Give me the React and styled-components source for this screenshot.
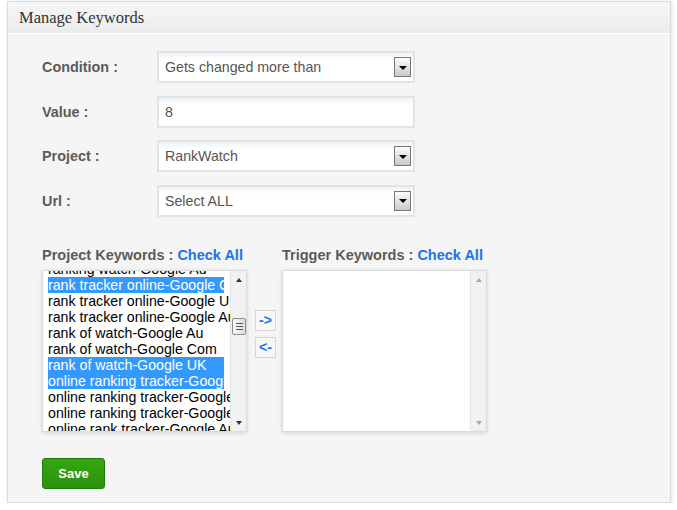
import React from "react";
import styled, { createGlobalStyle } from "styled-components";

const GlobalStyle = createGlobalStyle`
  body {
    margin: 0;
    background: #fff;
    font-family: "Liberation Sans", Arial, sans-serif;
  }
`;

const projectKeywords = [
  { text: "ranking watch-Google Au" },
  { text: "rank tracker online-Google Com", selected: true },
  { text: "rank tracker online-Google UK" },
  { text: "rank tracker online-Google Au" },
  { text: "rank of watch-Google Au" },
  { text: "rank of watch-Google Com" },
  { text: "rank of watch-Google UK", selected: true },
  { text: "online ranking tracker-Google Com", selected: true },
  { text: "online ranking tracker-Google UK" },
  { text: "online ranking tracker-Google Au" },
  { text: "online rank tracker-Google Au" },
];

export default function App() {
  return (
    <Page>
      <GlobalStyle />
      <Panel>
        <Header>Manage Keywords</Header>
        <Body>
          <Form>
            <Row>
              <Label>Condition :</Label>
              <Field>
                Gets changed more than
                <DropButton />
              </Field>
            </Row>
            <Row>
              <Label>Value :</Label>
              <Field>8</Field>
            </Row>
            <Row>
              <Label>Project :</Label>
              <Field>
                RankWatch
                <DropButton />
              </Field>
            </Row>
            <Row>
              <Label>Url :</Label>
              <Field>
                Select ALL
                <DropButton />
              </Field>
            </Row>
          </Form>

          <Keywords>
            <Column>
              <ListTitle>
                Project Keywords : <CheckAll>Check All</CheckAll>
              </ListTitle>
              <ListBox>
                <ListContent>
                  <Items>
                    {projectKeywords.map((k) => (
                      <Item key={k.text} $selected={k.selected}>
                        {k.text}
                      </Item>
                    ))}
                  </Items>
                </ListContent>
                <Scrollbar>
                  <Arrow $dir="up" />
                  <Thumb $top={47}>
                    <Grip />
                    <Grip />
                    <Grip />
                  </Thumb>
                  <Arrow $dir="down" />
                </Scrollbar>
              </ListBox>
            </Column>

            <Movers>
              <MoveButton>-&gt;</MoveButton>
              <MoveButton>&lt;-</MoveButton>
            </Movers>

            <Column>
              <ListTitle>
                Trigger Keywords : <CheckAll>Check All</CheckAll>
              </ListTitle>
              <ListBox>
                <ListContent />
                <Scrollbar>
                  <Arrow $dir="up" $disabled />
                  <Arrow $dir="down" $disabled />
                </Scrollbar>
              </ListBox>
            </Column>
          </Keywords>

          <SaveButton>Save</SaveButton>
        </Body>
      </Panel>
    </Page>
  );
}

const Page = styled.div`
  padding: 1px 6px 0 7px;
`;

const Panel = styled.div`
  box-sizing: border-box;
  height: 502px;
  background: #f5f5f5;
  border: 1px solid #dcdcdc;
  box-shadow: 1px 1px 4px rgba(0, 0, 0, 0.12);
`;

const Header = styled.div`
  height: 31px;
  line-height: 32px;
  padding-left: 11px;
  background: linear-gradient(#f7f7f7, #ebebeb);
  border-bottom: 1px solid #fff;
  font-family: "Liberation Serif", "Times New Roman", serif;
  font-size: 16.5px;
  color: #333;
`;

const Body = styled.div`
  padding: 17px 0 0 34px;
`;

const Form = styled.div`
  display: flex;
  flex-direction: column;
  gap: 12.5px;
`;

const Row = styled.div`
  display: flex;
  align-items: center;
  height: 32px;
`;

const Label = styled.div`
  width: 115px;
  font-size: 14.4px;
  font-weight: bold;
  color: #5b5b5b;
`;

const Field = styled.div`
  box-sizing: border-box;
  width: 258px;
  height: 32px;
  display: flex;
  align-items: center;
  padding-left: 6px;
  border: 2px solid #e3e3e3;
  background: linear-gradient(#eef3fa 0, #fff 7px);
  font-size: 14.2px;
  color: #555;
`;

const DropButton = styled.span`
  box-sizing: border-box;
  margin-left: auto;
  margin-right: 2px;
  width: 17px;
  height: 20px;
  border: 1px solid #777;
  background: linear-gradient(#fdfdfd, #c9c9c9);
  display: flex;
  align-items: center;
  justify-content: center;

  &::after {
    content: "";
    border-left: 4px solid transparent;
    border-right: 4px solid transparent;
    border-top: 4px solid #000;
    margin-top: 1px;
  }
`;

const Keywords = styled.div`
  display: flex;
  margin-top: 29px;
`;

const Column = styled.div`
  display: flex;
  flex-direction: column;
  width: 205px;
`;

const ListTitle = styled.div`
  height: 18px;
  line-height: 18px;
  margin-bottom: 6px;
  font-size: 14.5px;
  font-weight: bold;
  color: #5b5b5b;
  white-space: nowrap;
`;

const CheckAll = styled.span`
  color: #1a73f0;
`;

const ListBox = styled.div`
  box-sizing: border-box;
  height: 162px;
  display: flex;
  background: #fff;
  border: 1px solid #dadada;
  box-shadow: 0 1px 4px rgba(0, 0, 0, 0.14);
`;

const ListContent = styled.div`
  flex: 1;
  overflow: hidden;
`;

const Items = styled.div`
  margin-top: -10px;
  padding-left: 5px;
`;

const Item = styled.div`
  height: 16px;
  line-height: 16px;
  font-size: 14.2px;
  white-space: nowrap;
  overflow: hidden;
  margin-right: ${(p) => (p.$selected ? "6px" : "0")};
  background: ${(p) => (p.$selected ? "#3399ff" : "transparent")};
  color: ${(p) => (p.$selected ? "#fff" : "#000")};
`;

const Scrollbar = styled.div`
  position: relative;
  width: 16px;
  background: #f1f1f1;
  border-left: 1px solid #e4e4e4;
  display: flex;
  flex-direction: column;
  align-items: center;
  justify-content: space-between;
  padding: 7px 0 6px;
  box-sizing: border-box;
`;

const Arrow = styled.span`
  width: 0;
  height: 0;
  border-left: 3.5px solid transparent;
  border-right: 3.5px solid transparent;
  ${(p) =>
    p.$dir === "up"
      ? `border-bottom: 4px solid ${p.$disabled ? "#a8a8a8" : "#333"};`
      : `border-top: 4px solid ${p.$disabled ? "#a8a8a8" : "#333"};`}
`;

const Thumb = styled.div`
  position: absolute;
  left: 1px;
  top: ${(p) => p.$top}px;
  box-sizing: border-box;
  width: 14px;
  height: 17px;
  border: 1px solid #8e8e8e;
  border-radius: 2px;
  background: linear-gradient(90deg, #fafafa, #dcdcdc);
  display: flex;
  flex-direction: column;
  align-items: center;
  justify-content: center;
  gap: 2px;
`;

const Grip = styled.span`
  width: 7px;
  height: 1px;
  background: #555;
`;

const Movers = styled.div`
  display: flex;
  flex-direction: column;
  gap: 6px;
  margin: 64px 6px 0 8px;
`;

const MoveButton = styled.div`
  box-sizing: border-box;
  width: 21px;
  height: 21px;
  border: 1px solid #d6d6d6;
  background: #f7f7f7;
  display: flex;
  align-items: center;
  justify-content: center;
  font-size: 14px;
  font-weight: bold;
  color: #1a6ef5;
`;

const SaveButton = styled.button`
  display: block;
  margin-top: 26px;
  box-sizing: border-box;
  width: 63px;
  height: 31px;
  border: 1px solid #217a08;
  border-radius: 3px;
  background: linear-gradient(#34a612, #2a930b);
  color: #fff;
  font-family: "Liberation Sans", Arial, sans-serif;
  font-size: 13px;
  font-weight: bold;
  padding: 0;
`;
